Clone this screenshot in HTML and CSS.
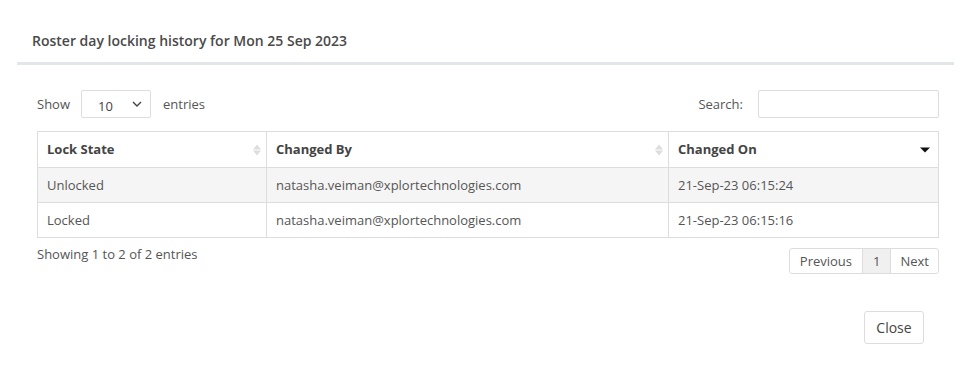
FILE: index.html
```html
<!DOCTYPE html>
<html>
<head>
<meta charset="utf-8">
<link rel="stylesheet" href="styles.css">
</head>
<body>
<div class="modal">
  <div class="modal-header">
    <h4 class="title">Roster day locking history for Mon 25 Sep 2023</h4>
  </div>
  <div class="modal-body">
    <div class="controls">
      <label class="length">Show
        <span class="select"><span class="val">10</span>
          <svg class="chev" width="10" height="6" viewBox="0 0 10 6"><path d="M1 1l4 4 4-4" fill="none" stroke="#444" stroke-width="1.4"/></svg>
        </span>
        entries</label>
      <label class="search">Search: <span class="input"></span></label>
    </div>
    <table class="grid">
      <thead>
        <tr>
          <th class="c1">Lock State<span class="sort"><i class="up"></i><i class="down"></i></span></th>
          <th class="c2">Changed By<span class="sort"><i class="up"></i><i class="down"></i></span></th>
          <th class="c3">Changed On<span class="sort active"><i class="down"></i></span></th>
        </tr>
      </thead>
      <tbody>
        <tr class="odd"><td>Unlocked</td><td>natasha.veiman@xplortechnologies.com</td><td>21-Sep-23 06:15:24</td></tr>
        <tr><td>Locked</td><td>natasha.veiman@xplortechnologies.com</td><td>21-Sep-23 06:15:16</td></tr>
      </tbody>
    </table>
    <div class="info-row">
      <div class="info">Showing 1 to 2 of 2 entries</div>
      <div class="pager">
        <span class="pg">Previous</span><span class="pg current">1</span><span class="pg">Next</span>
      </div>
    </div>
  </div>
  <div class="modal-footer">
    <button class="btn">Close</button>
  </div>
</div>
</body>
</html>
```
FILE: styles.css
```css
* { box-sizing: border-box; }
body {
  margin: 0;
  background: #fff;
  font-family: "Open Sans", "Liberation Sans", sans-serif;
  font-size: 13px;
  color: #555;
}
.modal {
  margin-left: 17px;
  width: 937px;
}
.modal-header {
  padding: 30px 15px 10px 15px;
  border-bottom: 3px solid #e3e6e9;
}
.title {
  margin: 0;
  font-size: 14px;
  font-weight: 600;
  line-height: 22px;
  color: #4a4a4a;
}
.modal-body {
  padding: 25px 15px 0 20px;
}
.controls {
  display: flex;
  justify-content: space-between;
  align-items: center;
  height: 28px;
}
.length, .search {
  display: flex;
  align-items: center;
  color: #555;
}
.select {
  display: inline-flex;
  align-items: center;
  justify-content: space-between;
  width: 70px;
  height: 28px;
  margin: 0 12px 0 11px;
  padding: 4px 8px 0 16px;
  border: 1px solid #ddd;
  border-radius: 2px;
  color: #444;
  font-size: 13px;
}
.chev { margin-top: -4px; }
.input {
  display: inline-block;
  width: 181px;
  height: 28px;
  margin-left: 15px;
  border: 1px solid #ddd;
  border-radius: 2px;
}
.grid {
  width: 100%;
  margin-top: 13px;
  border-collapse: collapse;
  border: 1px solid #ddd;
}
.grid th, .grid td {
  border: 1px solid #ddd;
  padding: 0 9px;
  text-align: left;
  height: 36px;
}
.grid td { height: 35px; color: #555; }
.grid th {
  position: relative;
  font-weight: 700;
  color: #444;
  padding-bottom: 2px;
}
.c1 { width: 229px; }
.c2 { width: 402px; }
.odd td { background: #f5f5f5; }
.sort {
  position: absolute;
  right: 5px;
  top: 50%;
  transform: translateY(-50%);
  display: flex;
  flex-direction: column;
  gap: 1px;
}
.sort i {
  display: block;
  width: 0; height: 0;
  border-left: 4px solid transparent;
  border-right: 4px solid transparent;
}
.sort .up { border-bottom: 5px solid #ddd; }
.sort .down { border-top: 5px solid #ddd; }
.sort.active { right: 8px; }
.sort.active .down {
  border-left-width: 5px;
  border-right-width: 5px;
  border-top: 5px solid #111;
}
.info-row {
  display: flex;
  justify-content: space-between;
  align-items: flex-start;
  margin-top: 7px;
}
.info { line-height: 18px; }
.pager {
  display: flex;
  margin-top: 3px;
  border: 1px solid #ddd;
  border-radius: 3px;
  height: 26px;
  overflow: hidden;
}
.pg {
  display: flex;
  align-items: center;
  padding: 0 9px;
  color: #555;
  border-left: 1px solid #ddd;
}
.pg:first-child { border-left: 0; padding: 0 10px; }
.pg.current { background: #f0f0f0; padding: 0 10px; }
.modal-footer {
  display: flex;
  justify-content: flex-end;
  padding: 37px 30px 0 0;
}
.btn {
  width: 60px;
  height: 33px;
  background: #fff;
  border: 1px solid #ddd;
  border-radius: 3px;
  font-family: inherit;
  font-size: 14px;
  color: #444;
  padding: 0 0 1px 0;
}
```
